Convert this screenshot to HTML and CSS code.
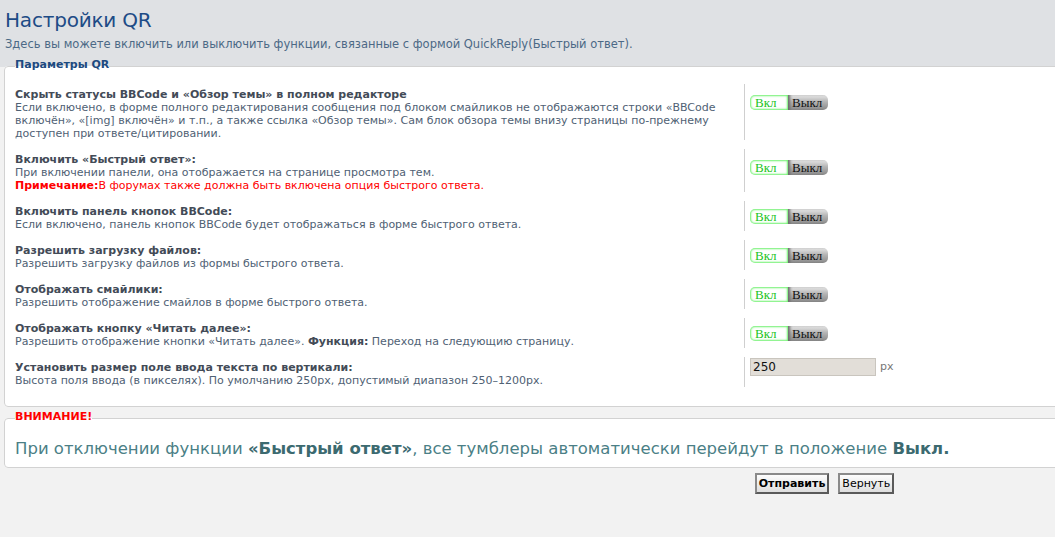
FILE: index.html
```html
<!DOCTYPE html>
<html lang="ru">
<head>
    <meta charset="UTF-8">
    <title>Настройки QR</title>
    <link rel="stylesheet" href="styles.css">
</head>
<body>
    <div class="page">
        <h1>Настройки QR</h1>
        <p class="intro">Здесь вы можете включить или выключить функции, связанные с формой QuickReply(Быстрый ответ).</p>

        <form>
            <fieldset class="panel">
                <legend>Параметры QR</legend>

                <div class="row row-tall">
                    <div class="info">
                        <b class="label">Скрыть статусы BBCode и «Обзор темы» в полном редакторе</b>
                        <span class="desc">Если включено, в форме полного редактирования сообщения под блоком смайликов не отображаются строки «BBCode включён», «[img] включён» и т.п., а также ссылка «Обзор темы». Сам блок обзора темы внизу страницы по-прежнему доступен при ответе/цитировании.</span>
                    </div>
                    <div class="ctrl">
                        <div class="toggle"><span class="on">Вкл</span><span class="off">Выкл</span></div>
                    </div>
                </div>

                <div class="row row-tall">
                    <div class="info">
                        <b class="label">Включить «Быстрый ответ»:</b>
                        <span class="desc">При включении панели, она отображается на странице просмотра тем.</span>
                        <span class="note"><b>Примечание:</b>В форумах также должна быть включена опция быстрого ответа.</span>
                    </div>
                    <div class="ctrl">
                        <div class="toggle"><span class="on">Вкл</span><span class="off">Выкл</span></div>
                    </div>
                </div>

                <div class="row">
                    <div class="info">
                        <b class="label">Включить панель кнопок BBCode:</b>
                        <span class="desc">Если включено, панель кнопок BBCode будет отображаться в форме быстрого ответа.</span>
                    </div>
                    <div class="ctrl">
                        <div class="toggle"><span class="on">Вкл</span><span class="off">Выкл</span></div>
                    </div>
                </div>

                <div class="row">
                    <div class="info">
                        <b class="label">Разрешить загрузку файлов:</b>
                        <span class="desc">Разрешить загрузку файлов из формы быстрого ответа.</span>
                    </div>
                    <div class="ctrl">
                        <div class="toggle"><span class="on">Вкл</span><span class="off">Выкл</span></div>
                    </div>
                </div>

                <div class="row">
                    <div class="info">
                        <b class="label">Отображать смайлики:</b>
                        <span class="desc">Разрешить отображение смайлов в форме быстрого ответа.</span>
                    </div>
                    <div class="ctrl">
                        <div class="toggle"><span class="on">Вкл</span><span class="off">Выкл</span></div>
                    </div>
                </div>

                <div class="row">
                    <div class="info">
                        <b class="label">Отображать кнопку «Читать далее»:</b>
                        <span class="desc">Разрешить отображение кнопки «Читать далее». <b>Функция:</b> Переход на следующию страницу.</span>
                    </div>
                    <div class="ctrl">
                        <div class="toggle"><span class="on">Вкл</span><span class="off">Выкл</span></div>
                    </div>
                </div>

                <div class="row row-input">
                    <div class="info">
                        <b class="label">Установить размер поле ввода текста по вертикали:</b>
                        <span class="desc">Высота поля ввода (в пикселях). По умолчанию 250px, допустимый диапазон 250–1200px.</span>
                    </div>
                    <div class="ctrl">
                        <input type="text" class="num" value="250"> <span class="unit">px</span>
                    </div>
                </div>
            </fieldset>

            <fieldset class="panel warn">
                <legend>ВНИМАНИЕ!</legend>
                <p>При отключении функции <b>«Быстрый ответ»</b>, все тумблеры автоматически перейдут в положение <b>Выкл.</b></p>
            </fieldset>

            <div class="buttons">
                <button type="submit" class="main">Отправить</button>
                <button type="reset">Вернуть</button>
            </div>
        </form>
    </div>
</body>
</html>
```

FILE: styles.css
```css
html {
    overflow: hidden;
    background: #f2f2f2;
}

body {
    margin: 0;
    font-family: 'DejaVu Sans', Verdana, sans-serif;
    font-size: 11px;
    background: #f2f2f2 linear-gradient(#dfe1e4, #dfe1e4) no-repeat;
    background-size: 100% 67px;
    color: #4f6174;
}

.page {
    width: 1649px;
}

h1 {
    margin: 0;
    padding: 7px 5px 0;
    font-size: 20px;
    font-weight: normal;
    line-height: 26px;
    letter-spacing: -0.2px;
    color: #1d4b86;
}

.intro {
    margin: 4px 5px 0;
    font-size: 11.5px;
    line-height: 14px;
    color: #4c6986;
}

.panel {
    margin: 7px 4px 0;
    padding: 9px 10px 19px;
    border: 1px solid #d2d2d2;
    border-radius: 4px;
    background: #fff;
    min-width: 0;
}

.panel legend {
    padding: 0 0 4px;
    font-size: 11px;
    font-weight: bold;
    line-height: 13px;
    color: #1c4a80;
}

.row {
    display: flex;
    margin-bottom: 9px;
}

.row:last-child {
    margin-bottom: 0;
}

.info {
    width: 724px;
    padding: 4px 5px 0 0;
    line-height: 13px;
    flex-shrink: 0;
}

.info span, .info .label {
    display: block;
}

.label {
    color: #434b57;
}

.desc b {
    color: #434b57;
}

.note {
    color: #f00;
}

.ctrl {
    display: flex;
    align-items: center;
    border-left: 1px solid #cfcfcf;
    padding-left: 5px;
}

.row-tall .ctrl {
    align-items: flex-start;
    padding-top: 11px;
}

.row-input .ctrl {
    align-items: flex-start;
    padding-top: 1px;
}

.toggle {
    display: flex;
    height: 15px;
    font-family: 'Liberation Serif', 'Times New Roman', serif;
    font-size: 13px;
    line-height: 15px;
}

.toggle .on {
    width: 38px;
    box-sizing: border-box;
    padding-left: 5px;
    border-radius: 5px 0 0 5px;
    background: #fff;
    color: #22c422;
    box-shadow: inset 0 0 2px 1px #6cf06c;
}

.toggle .off {
    width: 40px;
    box-sizing: border-box;
    padding-left: 4px;
    border-radius: 0 5px 5px 0;
    background: linear-gradient(to bottom, #e8e8e8 0%, #b4b4b4 45%, #8a8a8a 100%);
    box-shadow: inset 3px 0 3px -1px #6a6a6a;
    color: #111;
}

.num {
    width: 126px;
    height: 18px;
    box-sizing: border-box;
    margin: 0;
    padding: 0 0 0 2px;
    border: 1px solid #c9c5be;
    background: #e2ded8;
    font-family: 'DejaVu Sans', Verdana, sans-serif;
    font-size: 12px;
    color: #111;
}

.unit {
    margin-left: 4px;
    font-size: 11px;
    line-height: 18px;
    color: #777;
}

.warn {
    margin-top: 3px;
    padding: 12px 10px 8px;
}

.warn legend {
    color: #f00;
}

.warn p {
    margin: 0;
    font-size: 16.5px;
    line-height: 20px;
    color: #4b7f86;
}

.warn p b {
    color: #3c6a70;
}

.buttons {
    margin-top: 5px;
    display: flex;
    justify-content: center;
    gap: 9px;
}

.buttons button {
    height: 21px;
    padding: 0 2px;
    border: 2px solid #6c6c6c;
    border-color: #8a8a8a #5a5a5a #5a5a5a #8a8a8a;
    background: linear-gradient(to bottom, #fdfdfd, #dedede);
    font-family: 'DejaVu Sans', Verdana, sans-serif;
    font-size: 11px;
    color: #000;
    cursor: pointer;
}

.buttons .main {
    font-weight: bold;
}
```
